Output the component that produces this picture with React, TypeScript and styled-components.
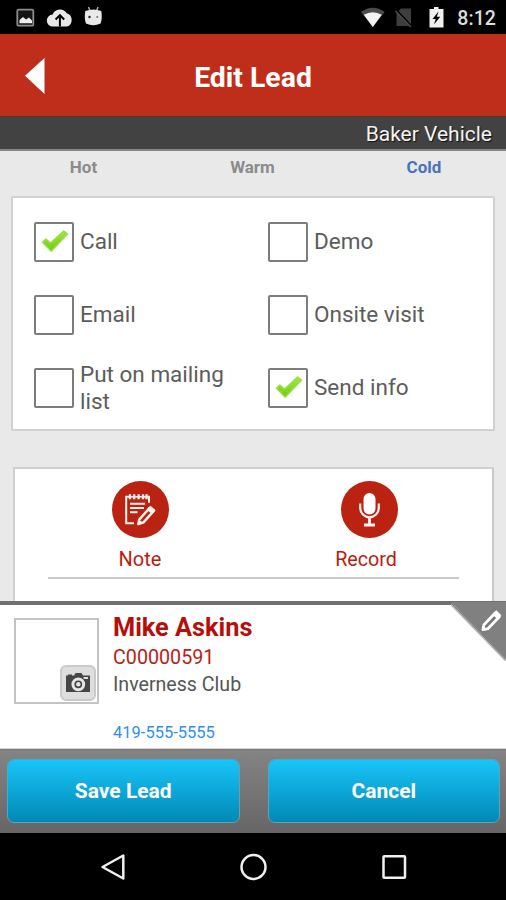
import React from 'react';
import styled, { createGlobalStyle } from 'styled-components';

const Global = createGlobalStyle`
  * { box-sizing: border-box; }
  body { margin: 0; background: #000; font-family: Roboto, 'Liberation Sans', sans-serif; }
  svg { display: block; flex: none; }
`;

const Screen = styled.div`
  width: 506px;
  height: 900px;
  display: flex;
  flex-direction: column;
  overflow: hidden;
  background: #e9e9e9;
`;

const Text = styled.span<{ $size: number; $line: number; $color: string; $weight?: number; $track?: number }>`
  display: block;
  white-space: nowrap;
  font-size: ${p => p.$size}px;
  line-height: ${p => p.$line}px;
  color: ${p => p.$color};
  font-weight: ${p => p.$weight ?? 400};
  letter-spacing: ${p => p.$track ?? 0}px;
`;

const StatusBar = styled.div`
  height: 34px;
  flex: none;
  display: flex;
  justify-content: space-between;
  padding: 0 10px 0 16px;
  background: #000;
`;

const StatusGroup = styled.div<{ $gap: number }>`
  display: flex;
  gap: ${p => p.$gap}px;
`;

const Header = styled.header`
  height: 82px;
  flex: none;
  display: grid;
  grid-template-columns: 60px 1fr 60px;
  align-items: center;
  justify-items: center;
  padding-top: 3px;
  background: #bf2e1b;
`;

const BackButton = styled.button`
  width: 60px;
  height: 60px;
  display: block;
  padding: 0;
  border: 0;
  background: none;
`;

const CompanyBar = styled.div`
  height: 35px;
  flex: none;
  display: flex;
  justify-content: flex-end;
  padding-right: 14px;
  background: #424242;
  border-bottom: 2px solid #868686;
  border-top: 1px solid #4a3a36;
  text-shadow: 1px 1px 1px #111;
`;

const Tabs = styled.nav`
  height: 45px;
  flex: none;
  display: grid;
  grid-template-columns: 167px 171px 172px;
  justify-items: center;
  padding-top: 5px;
`;

const Content = styled.main`
  height: 405px;
  flex: none;
  display: flex;
  flex-direction: column;
  gap: 36px;
  padding: 0 11px;
  overflow: hidden;
`;

const OptionsCard = styled.section`
  height: 235px;
  flex: none;
  display: grid;
  grid-template-columns: 234px 1fr;
  grid-template-rows: repeat(3, 73px);
  padding: 7px 0 0 21px;
  background: #fff;
  border: 2px solid #d2d2d2;
  border-radius: 2px;
`;

const Option = styled.label`
  display: flex;
  align-items: center;
  gap: 6px;
`;

const CheckBox = styled.span`
  width: 40px;
  height: 40px;
  flex: none;
  display: grid;
  place-items: center;
  border: 2px solid #7c7c7c;
  border-radius: 2px;
  background: #fff;
`;

const ActionsCard = styled.section`
  height: 150px;
  flex: none;
  margin: 0 1px 0 2px;
  background: #fff;
  border: 2px solid #d0d0d0;
  border-right-color: #c8c8c8;
`;

const ActionRow = styled.div`
  width: 411px;
  height: 110px;
  margin-left: 33px;
  display: flex;
  padding: 12px 0 0 0;
  border-bottom: 2px solid #c9c9c9;
`;

const Action = styled.button<{ $width: number }>`
  width: ${p => p.$width}px;
  flex: none;
  display: flex;
  flex-direction: column;
  align-items: center;
  gap: 8px;
  padding: 0;
  border: 0;
  background: none;
  font-family: inherit;
`;

const Disc = styled.span`
  width: 57px;
  height: 57px;
  border-radius: 50%;
  background: #ba2212;
`;

const RecordLabel = styled(Text)`
  padding-right: 6px;
`;

const Contact = styled.section`
  position: relative;
  height: 148px;
  flex: none;
  display: flex;
  gap: 14px;
  padding: 13px 0 0 14px;
  background: #fff;
  border-top: 4px solid #707070;
  border-bottom: 1px solid #d5d5d5;
`;

const Photo = styled.div`
  width: 85px;
  height: 86px;
  display: flex;
  align-items: flex-end;
  justify-content: flex-end;
  padding: 1px;
  border: 2px solid #c4c4c4;
`;

const CameraButton = styled.button`
  width: 36px;
  height: 36px;
  display: grid;
  place-items: center;
  padding: 0;
  background: #dedede;
  border: 2px solid #cacaca;
  border-radius: 6px;
`;

const Details = styled.div`
  display: flex;
  flex-direction: column;
  margin-top: -6px;
`;

const Phone = styled.div`
  margin-top: 23px;
`;

const EditCorner = styled.button`
  position: absolute;
  top: -3px;
  right: 0;
  padding: 0;
  border: 0;
  background: none;
`;

const ButtonBar = styled.div`
  height: 84px;
  flex: none;
  display: flex;
  gap: 28px;
  padding: 9px 6px 10px 7px;
  background: linear-gradient(#848484, #666);
  border-top: 1px solid #777;
`;

const BlueButton = styled.button`
  width: 233px;
  height: 64px;
  padding: 0;
  display: grid;
  place-items: center;
  background: linear-gradient(#19c4f8, #0189b5);
  background-clip: padding-box;
  border: 1px solid #58a5bd;
  border-radius: 7px;
  font-family: inherit;
`;

const NavBar = styled.div`
  height: 67px;
  flex: none;
  display: flex;
  justify-content: center;
  gap: 101px;
  padding-top: 14px;
  background: #000;
`;

const Tick = () => (
  <svg width="36" height="36" viewBox="0 0 36 36">
    <defs>
      <linearGradient id="tick" x1="0" y1="0" x2="0" y2="1">
        <stop offset="0" stopColor="#a6e63c" />
        <stop offset="1" stopColor="#6ace10" />
      </linearGradient>
    </defs>
    <path d="M6.500 18.200L9.800 15L14.600 19L27.600 7L31.600 10L15.200 27.300Z" fill="url(#tick)" stroke="#98dc48" strokeWidth="1.400" strokeLinejoin="round" />
  </svg>
);

const options: [string, boolean][] = [
  ['Call', true],
  ['Demo', false],
  ['Email', false],
  ['Onsite visit', false],
  ['Put on mailing\nlist', false],
  ['Send info', true],
];

const OptionLabel = styled(Text)`
  white-space: pre-line;
`;

const StatusIconsLeft = () => (
  <StatusGroup $gap={0}>
    <svg width="92" height="34" viewBox="0 0 92 34">
      <rect x="1.300" y="9.700" width="16" height="16" rx="1.300" fill="#151515" stroke="#8b8b8b" strokeWidth="1.800" />
      <path d="M3.500 23.300V20l3.500-3 3 2.500 3-2 3 3v2.800z" fill="#eee" />
      <path d="M37 26.500a6 6 0 0 1-.4-12 8 8 0 0 1 14.200-1.200 7 7 0 0 1 .4 13.200z" fill="#e8e8e8" />
      <path d="M43.900 26.500v-9.500M39.600 19.500l4.300-4.300 4.300 4.300" fill="none" stroke="#000" strokeWidth="2" />
      <path d="M72.500 7l2 5M82 7l-1.800 5" stroke="#aaa" strokeWidth="1.500" />
      <path d="M69.300 11q8-3 16 0q1.200 7-.7 12.500q-7.300 3.500-14.600 0q-2-5.500-.7-12.500z" fill="#e9e9e9" />
      <circle cx="73.500" cy="17" r="1.200" fill="#222" />
      <circle cx="81.300" cy="17" r="1.100" fill="#777" />
    </svg>
  </StatusGroup>
);

const StatusIconsRight = () => (
  <svg width="84" height="34" viewBox="0 0 84 34">
    <path d="M0 12Q11.800 3.500 23.600 12L11.800 27z" fill="#4b4b4b" />
    <path d="M2.800 14.800Q11.800 9.500 20.800 14.800L11.800 27z" fill="#f2f2f2" />
    <path d="M40 8.500h10v17.500H35.500V13z" fill="#3e3e3e" />
    <path d="M34 9L51 27" stroke="#000" strokeWidth="2.500" />
    <path d="M34.500 11L50 27" stroke="#4d4d4d" strokeWidth="1.300" />
    <path d="M73 7h4.500v2H82.500v18.500H68.500V9H73z" fill="#f0f0f0" />
    <path d="M77.500 11.500l-6 7.500h3.200l-1.700 5.500 6.200-7.700h-3.400z" fill="#000" />
  </svg>
);

const NoteIcon = () => (
  <svg width="57" height="57" viewBox="0 0 57 57" fill="none" stroke="#fff3ee">
    <path d="M22 42.200H14.200V15.800H17M34.500 15.800H37v6" strokeWidth="2" />
    <path d="M16 15.800H34.500" strokeWidth="1.500" />
    <path d="M18 13.200v5M22.200 13.200v5M26.600 13.200v5M31 13.200v5M34.500 13.200v5" strokeWidth="2.300" />
    <path d="M18 22.700H33M18 27H32M18 31.200H25.500" strokeWidth="1.900" />
    <path d="M38.300 26.200L42.200 29.400 31.500 41.400 26.300 43.200 27.200 38.600Z" strokeWidth="2.400" strokeLinejoin="round" />
    <path d="M37 25.700L42.400 30.200 39.500 33 34.800 28.500Z" fill="#fff3ee" stroke="none" />
    <path d="M26 43.400l1.400-4.500 3.600 2.900z" fill="#fff3ee" stroke="none" />
  </svg>
);

const MicIcon = () => (
  <svg width="57" height="57" viewBox="0 0 57 57" fill="none" stroke="#fff3ee">
    <rect x="22.500" y="12" width="12" height="21.500" rx="6" fill="#fff" stroke="none" />
    <path d="M19.200 22.500v4.500a9.300 9.300 0 0 0 18.600 0v-4.500" strokeWidth="2.200" />
    <path d="M28.500 36v8M23 44h11" strokeWidth="2.800" />
  </svg>
);

const CameraIcon = () => (
  <svg width="26" height="22" viewBox="0 0 26 22">
    <path d="M1 3.500h2V2.500h4v1h2.200L10.500 1h6l1.500 2.500h7V20H1z" fill="#464646" />
    <path d="M18.500 5h4.500v2h-4.500z" fill="#ddd" />
    <circle cx="13.300" cy="12.300" r="5.400" fill="#464646" stroke="#e6e6e6" strokeWidth="3" />
    <circle cx="13.300" cy="12.300" r="2.200" fill="#e6e6e6" />
  </svg>
);

export default function App() {
  return (
    <>
      <Global />
      <Screen>
        <StatusBar>
          <StatusIconsLeft />
          <StatusGroup $gap={12}>
            <StatusIconsRight />
            <Text $size={19.5} $line={37} $color="#ddd" $weight={500} $track={0.1}>8:12</Text>
          </StatusGroup>
        </StatusBar>

        <Header>
          <BackButton aria-label="Back">
            <svg width="60" height="60" viewBox="0 0 60 60">
              <path d="M25 27.700L44.500 10V46z" fill="#fff" />
            </svg>
          </BackButton>
          <Text $size={28.4} $line={82} $color="#fff" $weight={700}>Edit Lead</Text>
        </Header>

        <CompanyBar>
          <Text $size={21} $line={34} $color="#f4f4f4">Baker Vehicle</Text>
        </CompanyBar>

        <Tabs>
          <Text $size={17} $line={23} $color="#8b8b8b" $weight={700}>Hot</Text>
          <Text $size={17} $line={23} $color="#8b8b8b" $weight={700}>Warm</Text>
          <Text $size={17} $line={23} $color="#4a73bb" $weight={700}>Cold</Text>
        </Tabs>

        <Content>
          <OptionsCard>
            {options.map(([label, checked]) => (
              <Option key={label}>
                <CheckBox>{checked && <Tick />}</CheckBox>
                <OptionLabel $size={22.5} $line={27} $color="#5c5c5c">{label}</OptionLabel>
              </Option>
            ))}
          </OptionsCard>
          <ActionsCard>
            <ActionRow>
              <Action $width={184}>
                <Disc><NoteIcon /></Disc>
                <Text $size={20} $line={26} $color="#b81d10">Note</Text>
              </Action>
              <Action $width={274}>
                <Disc><MicIcon /></Disc>
                <RecordLabel $size={19.7} $line={27} $color="#b81d10">Record</RecordLabel>
              </Action>
            </ActionRow>
          </ActionsCard>
        </Content>

        <Contact>
          <Photo>
            <CameraButton aria-label="Take photo"><CameraIcon /></CameraButton>
          </Photo>
          <Details>
            <Text $size={25.3} $line={32} $color="#b50f0a" $weight={700}>Mike Askins</Text>
            <Text $size={19.7} $line={28} $color="#b81d18">C00000591</Text>
            <Text $size={19.6} $line={26} $color="#555">Inverness Club</Text>
            <Phone>
              <Text $size={16.5} $line={24} $color="#2d8ff2">419-555-5555</Text>
            </Phone>
          </Details>
          <EditCorner aria-label="Edit contact">
            <svg width="55" height="60" viewBox="0 0 55 60">
              <path d="M0 0H55V58.500z" fill="#808080" />
              <path d="M0 2L55 58.500" stroke="#b4b4b4" strokeWidth="2.500" />
              <path d="M1 2L55 57.500" stroke="#777" strokeWidth="1" />
              <g transform="translate(-1.200 1)">
                <path d="M33.200 26.700l.8-4.700L45.600 9.800l4 4L38 25.700z" fill="#777" stroke="#fff" strokeWidth="2.800" strokeLinejoin="round" />
                <path d="M42.500 11.500l4-4.200 5 5-3.700 4z" fill="#fff" />
              </g>
            </svg>
          </EditCorner>
        </Contact>

        <ButtonBar>
          <BlueButton><Text $size={21} $line={28} $color="#fff" $weight={700}>Save Lead</Text></BlueButton>
          <BlueButton><Text $size={21} $line={28} $color="#fff" $weight={700}>Cancel</Text></BlueButton>
        </ButtonBar>

        <NavBar>
          <svg width="40" height="40" viewBox="0 0 40 40" fill="none" stroke="#f0f0f0" strokeWidth="2.500">
            <path d="M10.500 20L31.300 8.500V31.500z" strokeLinejoin="round" />
          </svg>
          <svg width="40" height="40" viewBox="0 0 40 40" fill="none" stroke="#f0f0f0" strokeWidth="2.500">
            <circle cx="20.500" cy="20" r="12" />
          </svg>
          <svg width="40" height="40" viewBox="0 0 40 40" fill="none" stroke="#f0f0f0" strokeWidth="2.500">
            <rect x="9.500" y="9.300" width="21.500" height="21.500" rx="0.800" />
          </svg>
        </NavBar>
      </Screen>
    </>
  );
}
